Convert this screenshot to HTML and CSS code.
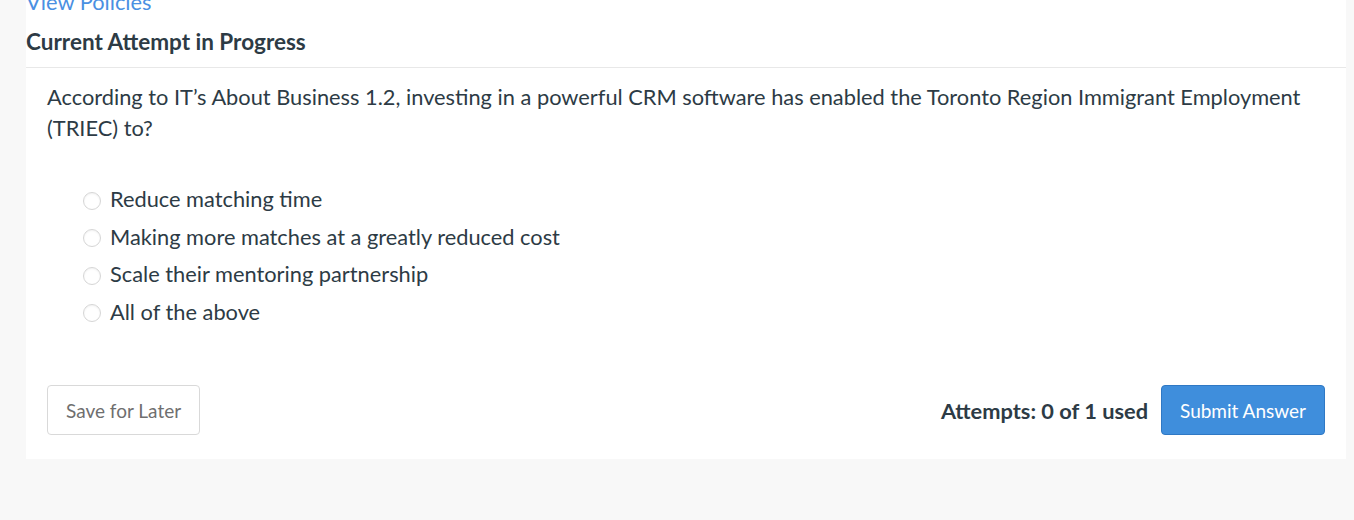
FILE: index.html
```html
<!DOCTYPE html>
<html lang="en">
<head>
<meta charset="utf-8">
<title>Current Attempt in Progress</title>
<link rel="stylesheet" href="styles.css">
</head>
<body>
<div class="page">
  <div class="panel">
    <a class="policies" href="#">View Policies</a>
    <h2 class="heading">Current Attempt in Progress</h2>
    <div class="body">
      <p class="question">According to IT’s About Business 1.2, investing in a powerful CRM software has enabled the Toronto Region Immigrant Employment (TRIEC) to?</p>
      <ul class="options">
        <li class="option"><span class="radio"></span><span>Reduce matching time</span></li>
        <li class="option"><span class="radio"></span><span>Making more matches at a greatly reduced cost</span></li>
        <li class="option"><span class="radio"></span><span>Scale their mentoring partnership</span></li>
        <li class="option"><span class="radio"></span><span>All of the above</span></li>
      </ul>
      <div class="actions">
        <button class="btn btn-secondary">Save for Later</button>
        <div class="submit-group">
          <span class="attempts">Attempts: 0 of 1 used</span>
          <button class="btn btn-primary">Submit Answer</button>
        </div>
      </div>
    </div>
  </div>
</div>
</body>
</html>
```
FILE: styles.css
```css
* { box-sizing: border-box; }
html, body {
  margin: 0;
  padding: 0;
  background: #f8f8f8;
  font-family: Lato, "Open Sans", sans-serif;
  color: #2d3b45;
}
.page {
  padding: 0 8px 0 26px;
  height: 520px;
  overflow: hidden;
}
.panel {
  background: #fff;
  padding-bottom: 24px;
}
.policies {
  display: block;
  color: #4a90e2;
  text-decoration: none;
  font-size: 21.8px;
  line-height: 26px;
  margin-top: -11px;
}
.heading {
  margin: 0;
  font-size: 22.5px;
  font-weight: 700;
  line-height: 27px;
  padding: 13px 0 12px;
  border-bottom: 1px solid #e8e8e8;
}
.body {
  padding: 13px 21px 0 21px;
}
.question {
  margin: 0;
  font-size: 21.8px;
  line-height: 31px;
}
.options {
  list-style: none;
  margin: 0;
  padding: 37px 0 0 36px;
}
.option {
  display: flex;
  align-items: center;
  gap: 9px;
  font-size: 21.8px;
  line-height: 37.5px;
}
.radio {
  width: 18px;
  height: 18px;
  margin-top: 4px;
  border-radius: 50%;
  border: 1px solid #d6d6d6;
  background: #fff;
  box-shadow: inset 0 1px 2px rgba(0, 0, 0, 0.06);
  flex: none;
}
.actions {
  display: flex;
  justify-content: space-between;
  align-items: center;
  margin-top: 55px;
}
.submit-group {
  display: flex;
  align-items: center;
  gap: 13px;
}
.attempts {
  font-size: 21.8px;
  font-weight: 700;
}
.btn {
  font-family: Lato, "Open Sans", sans-serif;
  font-size: 19px;
  height: 50px;
  border-radius: 4px;
  padding: 0 18px;
  cursor: pointer;
}
.btn-secondary {
  background: #fff;
  color: #6f6f6f;
  border: 1px solid #d9d9d9;
}
.btn-primary {
  background: #3f8edc;
  color: #fff;
  border: 1px solid #2f78c4;
}
```
